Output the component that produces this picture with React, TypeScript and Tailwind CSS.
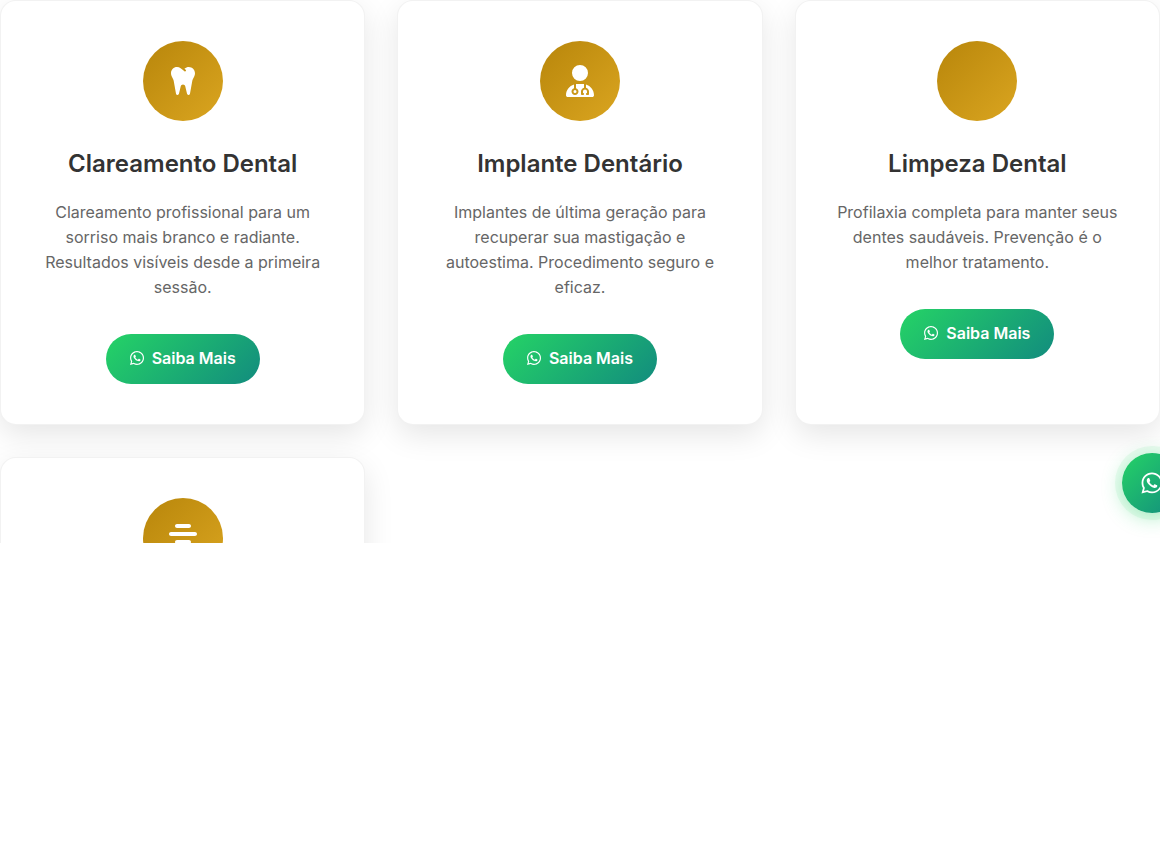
import React from 'react';
import { FaAlignCenter, FaTooth, FaUserDoctor, FaWhatsapp } from 'react-icons/fa6';
import type { IconType } from 'react-icons';

interface Service {
  title: string;
  description: string;
  icon?: IconType;
}

const SERVICES: Service[] = [
  {
    title: 'Clareamento Dental',
    description:
      'Clareamento profissional para um sorriso mais branco e radiante. Resultados visíveis desde a primeira sessão.',
    icon: FaTooth,
  },
  {
    title: 'Implante Dentário',
    description:
      'Implantes de última geração para recuperar sua mastigação e autoestima. Procedimento seguro e eficaz.',
    icon: FaUserDoctor,
  },
  {
    title: 'Limpeza Dental',
    description:
      'Profilaxia completa para manter seus dentes saudáveis. Prevenção é o melhor tratamento.',
  },
];

function ServiceIcon({ icon: Icon }: { icon?: IconType }) {
  return (
    <div className="mb-6 flex size-20 shrink-0 items-center justify-center rounded-full bg-linear-[135deg,#b8860b,#daa520] text-[32px] text-white">
      {Icon && <Icon className="h-8 w-7" aria-hidden="true" />}
    </div>
  );
}

function Card({ children }: { children: React.ReactNode }) {
  return (
    <article className="flex flex-col items-center rounded-2xl border border-black/5 bg-white p-10 text-center shadow-[0_10px_30px_rgba(0,0,0,0.1)]">
      {children}
    </article>
  );
}

function ServiceCard({ title, description, icon }: Service) {
  return (
    <Card>
      <ServiceIcon icon={icon} />
      <h3 className="mb-[18px] text-2xl leading-[37px] font-semibold text-[#333]">{title}</h3>
      <p className="mb-[34px] text-base leading-[25px] text-[#666]">{description}</p>
      <a
        href="#contato"
        className="inline-flex items-center gap-2 rounded-full bg-linear-[135deg,#25d366,#128c7e] px-6 pt-3 pb-3.5 leading-6 font-semibold text-white"
      >
        <FaWhatsapp className="h-4 w-3.5" aria-hidden="true" />
        Saiba Mais
      </a>
    </Card>
  );
}

export default function App() {
  return (
    <main className="relative h-[543px] overflow-hidden bg-white font-['Inter',sans-serif]">
      <section className="grid grid-cols-3 gap-8">
        {SERVICES.map((service) => (
          <ServiceCard key={service.title} {...service} />
        ))}
        <Card>
          <ServiceIcon icon={FaAlignCenter} />
        </Card>
      </section>

      <a
        href="#whatsapp"
        aria-label="WhatsApp"
        className="absolute -right-[22px] bottom-[30px] flex size-[60px] items-center justify-center rounded-full bg-linear-[135deg,#25d366,#128c7e] text-white shadow-[0_4px_20px_rgba(37,211,102,0.4),0_0_0_7px_rgba(37,211,102,0.08)]"
      >
        <FaWhatsapp className="size-6" aria-hidden="true" />
      </a>
    </main>
  );
}
